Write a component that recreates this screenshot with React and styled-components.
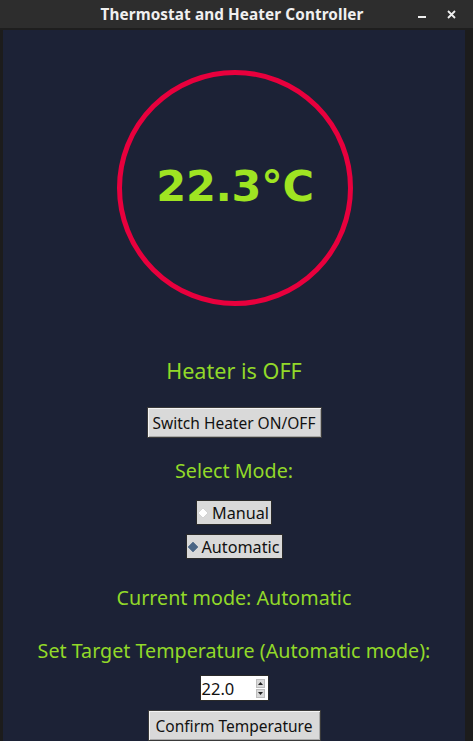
import React from "react";
import styled, { createGlobalStyle } from "styled-components";

const Global = createGlobalStyle`
  html, body { margin: 0; padding: 0; background: #1b1b1b; }
  body { font-family: "Noto Sans", "Open Sans", sans-serif; }
`;

const Frame = styled.div`
  width: 473px;
  height: 741px;
  display: flex;
  flex-direction: column;
  background: #1c1c1c;
  overflow: hidden;
  box-sizing: border-box;
  padding: 0 8px 0 3px;
`;

const TitleBar = styled.div`
  height: 28px;
  flex: none;
  margin: 0 -8px 0 -3px;
  padding: 0 8px 0 3px;
  background: #2d2d2d;
  border-bottom: 2px solid #1e1e1e;
  display: grid;
  grid-template-columns: 1fr auto 1fr;
  align-items: center;
  color: #f0f0f0;
`;

const Title = styled.div`
  grid-column: 2;
  font-family: "Noto Sans", sans-serif;
  font-weight: 700;
  font-size: 15.3px;
  letter-spacing: 0.1px;
  transform: translateX(-2px);
`;

const Controls = styled.div`
  grid-column: 3;
  justify-self: end;
  display: flex;
  align-items: center;
  gap: 20px;
  padding-right: 9px;
`;

const Body = styled.div`
  flex: 1;
  background: #1c2236;
  display: flex;
  flex-direction: column;
  align-items: center;
`;

const Dial = styled.div`
  margin-top: 40px;
  width: 236px;
  height: 236px;
  box-sizing: border-box;
  border: 5px solid #e8003d;
  border-radius: 50%;
  display: flex;
  align-items: center;
  justify-content: center;
  margin-left: 2px;
`;

const Reading = styled.div`
  font-family: "DejaVu Sans", sans-serif;
  font-weight: 700;
  font-size: 43px;
  color: #9fe422;
  line-height: 1;
  margin-top: -4px;
  letter-spacing: -0.3px;
`;

const Label = styled.div`
  font-family: "Noto Sans", sans-serif;
  font-size: ${(p) => p.$size || 19.7}px;
  line-height: 28px;
  color: #92d929;
  margin-top: ${(p) => p.$mt}px;
`;

const TkButton = styled.button`
  margin-top: ${(p) => p.$mt}px;
  font-family: "Noto Sans", sans-serif;
  font-size: 15.5px;
  color: #111;
  background: #d9d9d9;
  height: 31px;
  padding: 0 4px;
  border: 1px solid #3a3a3a;
  box-shadow: inset 1px 1px 0 #f4f4f4, inset -1px -1px 0 #a8a8a8;
  display: flex;
  align-items: center;
  justify-content: center;
  width: ${(p) => p.$w}px;
  cursor: pointer;
`;

const Radio = styled.label`
  margin-top: ${(p) => p.$mt}px;
  display: flex;
  align-items: center;
  gap: 3px;
  height: 25px;
  box-sizing: border-box;
  padding: 0 2px 0 0;
  background: #d9d9d9;
  border: 1px solid #2a2a2a;
  font-family: "Noto Sans", sans-serif;
  font-size: 16.2px;
  color: #111;
`;

const Spin = styled.div`
  margin-top: 10px;
  width: 69px;
  height: 26px;
  box-sizing: border-box;
  background: #fff;
  border: 1px solid #2a2a2a;
  display: flex;
  align-items: center;
  justify-content: space-between;
  padding: 0 3px 0 1px;
  font-family: "Noto Sans", sans-serif;
  font-size: 16.5px;
  color: #111;
`;

const Arrows = styled.div`
  display: flex;
  flex-direction: column;
  gap: 1px;
`;

const ArrowBtn = styled.div`
  width: 9px;
  height: 9px;
  background: #d9d9d9;
  border: 1px solid #bdbdbd;
  box-sizing: border-box;
  display: flex;
  align-items: center;
  justify-content: center;
`;

const Diamond = ({ on }) => (
  <svg width="12" height="12" viewBox="0 0 12 12">
    <polygon points="6,1 11,6 6,11 1,6" fill={on ? "#4a6585" : "#ffffff"} stroke={on ? "#4a6585" : "#c4c4c4"} strokeWidth="0.6" />
  </svg>
);

export default function App() {
  return (
    <>
      <Global />
      <Frame>
        <TitleBar>
          <Title>Thermostat and Heater Controller</Title>
          <Controls>
            <svg width="9" height="10" viewBox="0 0 9 10">
              <rect x="0" y="7" width="8" height="2" fill="#eeeeee" />
            </svg>
            <svg width="9" height="9" viewBox="0 0 9 9">
              <path d="M1 1 L8 8 M8 1 L1 8" stroke="#eeeeee" strokeWidth="1.8" />
            </svg>
          </Controls>
        </TitleBar>
        <Body>
          <Dial>
            <Reading>22.3°C</Reading>
          </Dial>
          <Label $mt={51} $size={21.6}>Heater is OFF</Label>
          <TkButton $mt={22} $w={175}>Switch Heater ON/OFF</TkButton>
          <Label $mt={19}>Select Mode:</Label>
          <Radio $mt={15}>
            <Diamond on={false} />
            Manual
          </Radio>
          <Radio $mt={9}>
            <Diamond on />
            Automatic
          </Radio>
          <Label $mt={25}>Current mode: Automatic</Label>
          <Label $mt={25}>Set Target Temperature (Automatic mode):</Label>
          <Spin>
            <span>22.0</span>
            <Arrows>
              <ArrowBtn>
                <svg width="5" height="3" viewBox="0 0 5 3"><polygon points="2.5,0 5,3 0,3" fill="#222" /></svg>
              </ArrowBtn>
              <ArrowBtn>
                <svg width="5" height="3" viewBox="0 0 5 3"><polygon points="0,0 5,0 2.5,3" fill="#222" /></svg>
              </ArrowBtn>
            </Arrows>
          </Spin>
          <TkButton $mt={9} $w={173}>Confirm Temperature</TkButton>
        </Body>
      </Frame>
    </>
  );
}
